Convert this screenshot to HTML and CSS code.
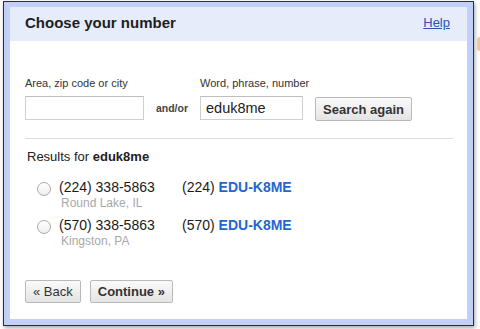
FILE: index.html
```html
<!DOCTYPE html>
<html lang="en">
<head>
  <meta charset="UTF-8" />
  <title>Choose your number</title>
  <link rel="stylesheet" href="styles.css">
</head>
<body>

  <div class="window">
    <div class="dialog">

      <div class="dialog-header">
        <h1 class="title">Choose your number</h1>
        <a href="#" class="help-link">Help</a>
      </div>

      <div class="dialog-body">

        <form class="search-form">
          <div class="field field-area">
            <label class="field-label">Area, zip code or city</label>
            <input class="text-input" type="text" value="">
          </div>
          <span class="andor">and/or</span>
          <div class="field field-word">
            <label class="field-label">Word, phrase, number</label>
            <input class="text-input" type="text" value="eduk8me">
          </div>
          <button type="button" class="btn btn-bold">Search again</button>
        </form>

        <div class="divider"></div>

        <p class="results-title">Results for <b>eduk8me</b></p>

        <ul class="results">
          <li class="result">
            <span class="radio"></span>
            <div class="result-main">
              <div class="number">(224) 338-5863</div>
              <div class="place">Round Lake, IL</div>
            </div>
            <div class="vanity">(224) <b>EDU-K8ME</b></div>
          </li>
          <li class="result">
            <span class="radio"></span>
            <div class="result-main">
              <div class="number">(570) 338-5863</div>
              <div class="place">Kingston, PA</div>
            </div>
            <div class="vanity">(570) <b>EDU-K8ME</b></div>
          </li>
        </ul>

        <div class="actions">
          <button type="button" class="btn">&laquo; Back</button>
          <button type="button" class="btn btn-bold">Continue &raquo;</button>
        </div>

      </div>
    </div>
  </div>

  <!-- bit of the window behind -->
  <div class="behind"></div>

</body>
</html>
```

FILE: styles.css
```css
* {
  margin: 0;
  padding: 0;
  box-sizing: border-box;
}

html, body {
  width: 480px;
  height: 329px;
  overflow: hidden;
  background: #fff;
  font-family: "Liberation Sans", Arial, sans-serif;
  color: #222;
}

body {
  padding: 1px 0 0 3px;
}

.window {
  width: 471px;
  height: 325px;
  border: 1px solid #2e2e36;
  background: #c2cff6;
  padding: 5px 6px 6px 6px;
  box-shadow: 1px 2px 4px rgba(0, 0, 0, 0.35);
}

.dialog {
  height: 100%;
  background: #fff;
  display: flex;
  flex-direction: column;
}

.dialog-header {
  height: 34px;
  background: #e6ecf9;
  display: flex;
  align-items: center;
  justify-content: space-between;
  padding: 0 17px 3px 15px;
}

.title {
  font-size: 15px;
  font-weight: bold;
  color: #1e1e1e;
}

.help-link {
  font-size: 13px;
  color: #2b4fc4;
  text-decoration: underline;
}

.dialog-body {
  padding: 36px 14px 0 15px;
}

/* search row */
.search-form {
  display: flex;
  align-items: flex-end;
}

.field {
  display: flex;
  flex-direction: column;
}

.field-label {
  font-size: 11px;
  line-height: 13px;
  color: #333;
  margin-bottom: 6px;
  white-space: nowrap;
}

.text-input {
  height: 24px;
  border: 1px solid #cfcfcf;
  border-top-color: #bdbdbd;
  font-family: inherit;
  font-size: 14.5px;
  color: #222;
  padding: 0 5px;
  outline: none;
  width: 100%;
}

.field-area { width: 119px; }
.field-word { width: 103px; margin-right: 12px; }

.andor {
  font-size: 10.5px;
  font-weight: bold;
  color: #444;
  width: 56px;
  text-align: center;
  line-height: 24px;
}

.btn {
  height: 23px;
  border: 1px solid #b9b9b9;
  border-radius: 2px;
  background: linear-gradient(#fafafa, #e4e4e4);
  font-family: inherit;
  font-size: 13px;
  color: #333;
  padding: 0 7px;
  white-space: nowrap;
  cursor: pointer;
}

.btn-bold {
  font-weight: bold;
}

.search-form .btn {
  width: 97px;
  height: 24px;
  padding: 0;
  margin-bottom: -1px;
}

.divider {
  height: 1px;
  background: #dedede;
  margin: 18px 0 10px;
}

/* results */
.results-title {
  font-size: 13px;
  line-height: 16px;
  color: #222;
  padding-left: 2px;
}

.results {
  list-style: none;
  margin-top: 14px;
  padding-left: 12px;
}

.result {
  display: flex;
  align-items: flex-start;
  margin-bottom: 7px;
}

.radio {
  width: 14px;
  height: 14px;
  border: 1px solid #a9a9a9;
  border-radius: 50%;
  background: linear-gradient(#fff, #eee);
  margin: 3px 8px 0 0;
  flex: none;
}

.result-main {
  width: 123px;
}

.number,
.vanity {
  font-size: 14px;
  line-height: 17px;
  color: #1a1a1a;
}

.place {
  font-size: 12px;
  line-height: 14px;
  color: #a8a8a8;
  padding-left: 2px;
}

.vanity b {
  color: #1f67cf;
}

/* bottom buttons */
.actions {
  display: flex;
  gap: 9px;
  margin-top: 32px;
}

.behind {
  position: absolute;
  left: 477px;
  top: 37px;
  width: 4px;
  height: 14px;
  border-radius: 3px 0 0 3px;
  background: #f3c39c;
}
```
